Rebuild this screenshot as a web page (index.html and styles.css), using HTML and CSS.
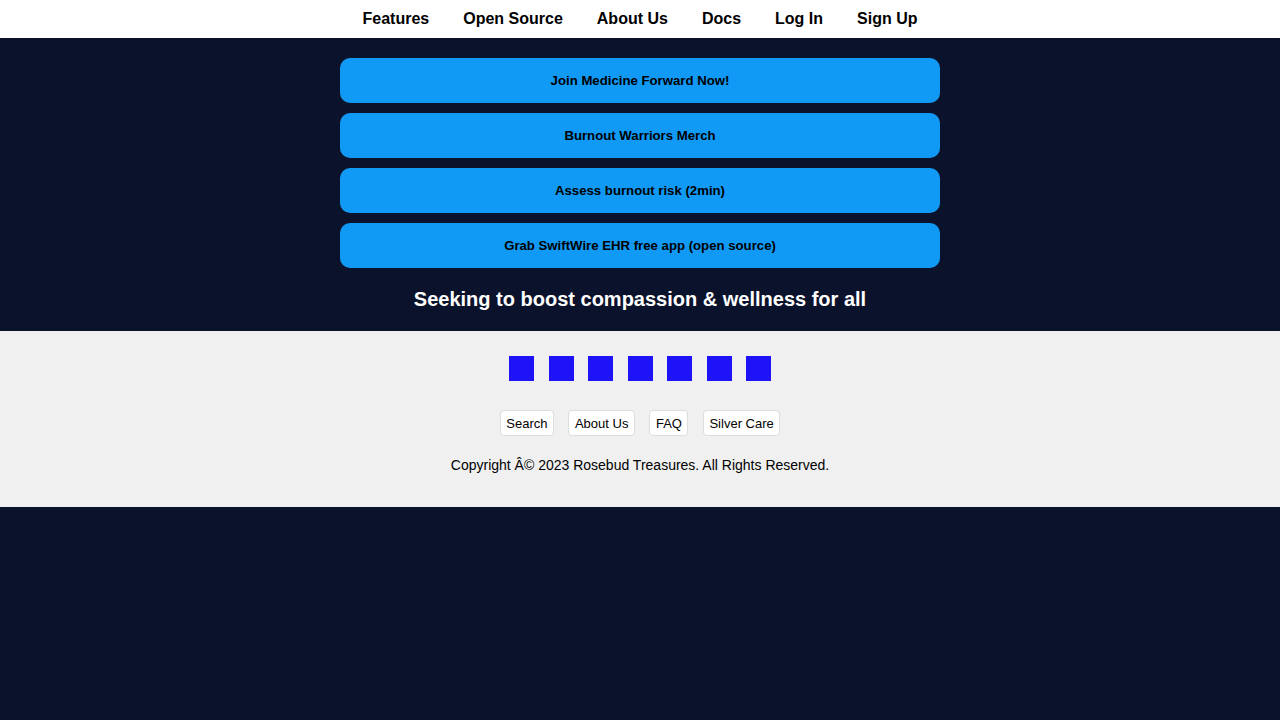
FILE: index.html
```html
<!DOCTYPE html>
<html lang="en">
<head>
<meta charset="utf-8">
<title>Medicine Forward</title>
<link rel="stylesheet" href="styles.css">
</head>
<body>
<nav class="topnav">
  <a href="#">Features</a>
  <a href="#">Open Source</a>
  <a href="#">About Us</a>
  <a href="#">Docs</a>
  <a href="#">Log In</a>
  <a href="#">Sign Up</a>
</nav>
<main class="main">
  <div class="links">
    <a class="btn" href="#">Join Medicine Forward Now!</a>
    <a class="btn" href="#">Burnout Warriors Merch</a>
    <a class="btn" href="#">Assess burnout risk (2min)</a>
    <a class="btn" href="#">Grab SwiftWire EHR free app (open source)</a>
  </div>
  <h2 class="tagline">Seeking to boost compassion &amp; wellness for all</h2>
</main>
<footer class="footer">
  <div class="socials">
    <span class="sq"></span><span class="sq"></span><span class="sq"></span><span class="sq"></span><span class="sq"></span><span class="sq"></span><span class="sq"></span>
  </div>
  <div class="flinks">
    <a href="#">Search</a>
    <a href="#">About Us</a>
    <a href="#">FAQ</a>
    <a href="#">Silver Care</a>
  </div>
  <p class="copy">Copyright Â© 2023 Rosebud Treasures. All Rights Reserved.</p>
</footer>
</body>
</html>
```

FILE: styles.css
```css
html, body {
  margin: 0;
  padding: 0;
}
body {
  background: #0b122b;
  font-family: "Liberation Sans", Arial, sans-serif;
}
.topnav {
  background: #ffffff;
  height: 38px;
  display: flex;
  justify-content: center;
  align-items: center;
  gap: 34px;
}
.topnav a {
  color: #000;
  text-decoration: none;
  font-weight: bold;
  font-size: 16px;
}
.main {
  padding: 20px 0 20px;
  display: flex;
  flex-direction: column;
  align-items: center;
}
.links {
  display: flex;
  flex-direction: column;
  gap: 10px;
  width: 600px;
}
.btn {
  display: flex;
  align-items: center;
  justify-content: center;
  height: 45px;
  background: #1199f6;
  border-radius: 10px;
  color: #000;
  text-decoration: none;
  font-weight: bold;
  font-size: 13.2px;
}
.tagline {
  color: #ffffff;
  font-size: 20px;
  font-weight: bold;
  margin: 20px 0 0;
  line-height: 23px;
}
.footer {
  background: #f0f0f0;
  padding: 25px 0 34px;
  display: flex;
  flex-direction: column;
  align-items: center;
}
.socials {
  display: flex;
  gap: 14.5px;
}
.sq {
  width: 25px;
  height: 25px;
  background: #1e12f7;
}
.flinks {
  display: flex;
  gap: 14.5px;
  margin-top: 29px;
}
.flinks a {
  display: block;
  background: #fff;
  border: 1px solid #dddddd;
  border-radius: 4px;
  padding: 0 5.5px;
  height: 24px;
  line-height: 25px;
  font-size: 13px;
  color: #000;
  text-decoration: none;
}
.copy {
  margin: 21px 0 0;
  font-size: 14px;
  line-height: 16px;
  color: #000;
}
```
